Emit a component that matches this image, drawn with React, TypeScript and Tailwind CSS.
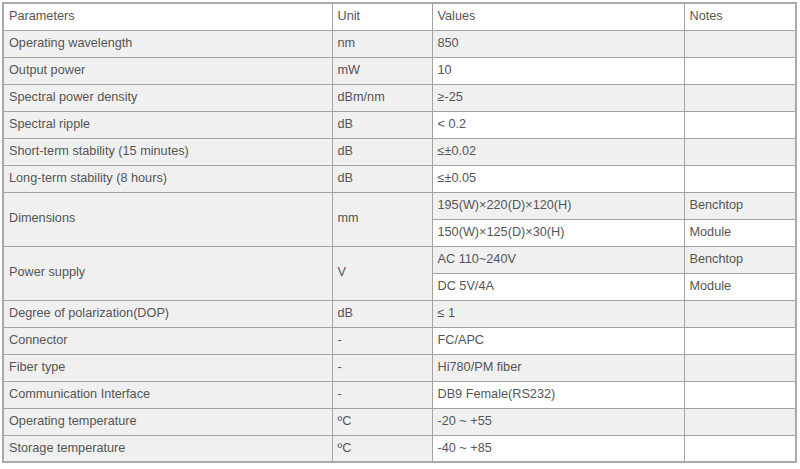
const rows: { p: string; u: string; v: string[]; n?: string[] }[] = [
  { p: 'Operating wavelength', u: 'nm', v: ['850'] },
  { p: 'Output power', u: 'mW', v: ['10'] },
  { p: 'Spectral power density', u: 'dBm/nm', v: ['≥-25'] },
  { p: 'Spectral ripple', u: 'dB', v: ['< 0.2'] },
  { p: 'Short-term stability (15 minutes)', u: 'dB', v: ['≤±0.02'] },
  { p: 'Long-term stability (8 hours)', u: 'dB', v: ['≤±0.05'] },
  {
    p: 'Dimensions',
    u: 'mm',
    v: ['195(W)×220(D)×120(H)', '150(W)×125(D)×30(H)'],
    n: ['Benchtop', 'Module'],
  },
  {
    p: 'Power supply',
    u: 'V',
    v: ['AC 110~240V', 'DC 5V/4A'],
    n: ['Benchtop', 'Module'],
  },
  { p: 'Degree of polarization(DOP)', u: 'dB', v: ['≤ 1'] },
  { p: 'Connector', u: '-', v: ['FC/APC'] },
  { p: 'Fiber type', u: '-', v: ['Hi780/PM fiber'] },
  { p: 'Communication Interface', u: '-', v: ['DB9 Female(RS232)'] },
  { p: 'Operating temperature', u: 'ºC', v: ['-20 ~ +55'] },
  { p: 'Storage temperature', u: 'ºC', v: ['-40 ~ +85'] },
];

const cell = 'border border-[#a3a3a3] h-[27px] pl-[5px] pr-[6px] py-0 align-middle';

export default function App() {
  // flatten into <tr>s so the zebra striping follows the real table rows
  const trs: JSX.Element[] = [];
  let idx = 1;
  rows.forEach((r) => {
    r.v.forEach((val, j) => {
      const bg = idx % 2 === 1 ? 'bg-[#f0f0f0]' : 'bg-white';
      trs.push(
        <tr key={`${r.p}-${j}`} className={bg}>
          {j === 0 && (
            <>
              <td rowSpan={r.v.length} className={`${cell} bg-[#f0f0f0]`}>
                {r.p}
              </td>
              <td rowSpan={r.v.length} className={`${cell} bg-[#f0f0f0]`}>
                {r.u}
              </td>
            </>
          )}
          <td className={cell}>{val}</td>
          <td className={cell}>{r.n ? r.n[j] : ''}</td>
        </tr>,
      );
      idx++;
    });
  });

  return (
    <div className="w-[800px] h-[469px] bg-white pt-[2px] pl-[2px]">
      <table
        className="border-collapse border-2 border-[#a9a9a9] text-[12.7px] text-[#555555] w-[795px] table-fixed"
        style={{ fontFamily: '"Liberation Sans", Arial, sans-serif' }}
      >
        <colgroup>
          <col className="w-[329px]" />
          <col className="w-[100px]" />
          <col className="w-[252px]" />
          <col />
        </colgroup>
        <tbody>
          <tr className="bg-white">
            <td className={cell}>Parameters</td>
            <td className={cell}>Unit</td>
            <td className={cell}>Values</td>
            <td className={cell}>Notes</td>
          </tr>
          {trs}
        </tbody>
      </table>
    </div>
  );
}
